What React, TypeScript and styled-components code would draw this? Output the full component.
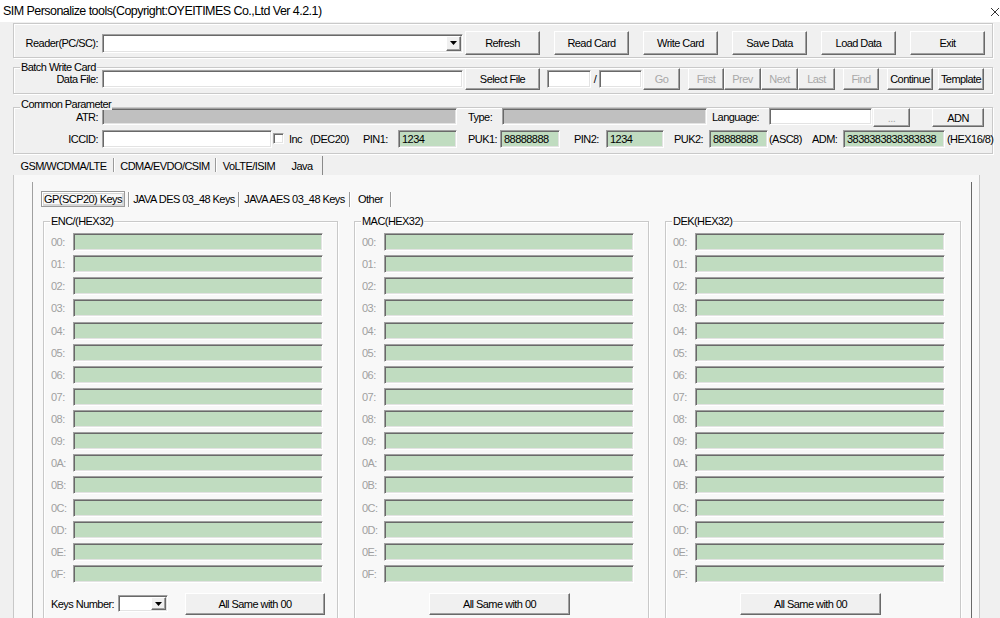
import React from 'react';
import styled, { createGlobalStyle, css } from 'styled-components';

const GlobalStyle = createGlobalStyle`
  html, body {
    margin: 0;
    padding: 0;
  }
  body {
    background: #f0f0f0;
    font-family: 'Liberation Sans', Arial, sans-serif;
    font-size: 11px;
    letter-spacing: -0.55px;
    color: #000;
  }
  * {
    box-sizing: border-box;
  }
`;

const sunken = css`
  border-style: solid;
  border-width: 1px;
  border-color: #a0a0a0 #ffffff #ffffff #a0a0a0;
  box-shadow: inset 1px 1px 0 #696969, inset -1px -1px 0 #e3e3e3;
`;

const raised = css`
  border-style: solid;
  border-width: 1px;
  border-color: #ffffff #696969 #696969 #ffffff;
  box-shadow: inset -1px -1px 0 #a0a0a0;
`;

const tones = {
  white: '#ffffff',
  green: '#c0dcc0',
  gray: '#c0c0c0',
};

const Window = styled.div`
  width: 1000px;
  height: 618px;
  overflow: hidden;
  display: flex;
  flex-direction: column;
  background: #f0f0f0;
`;

const TitleBar = styled.div`
  flex: none;
  height: 22px;
  background: #ffffff;
  display: flex;
  align-items: center;
  justify-content: space-between;
  padding-left: 3px;
`;

const Title = styled.span`
  font-size: 12.5px;
  letter-spacing: -0.55px;
  white-space: nowrap;
`;

const CloseIcon = styled.svg`
  flex: none;
  margin-top: 1px;
`;

const Main = styled.div`
  flex: 1;
  min-height: 0;
  display: flex;
  flex-direction: column;
  padding: 1px 7px 0 13px;
`;

const Frame = styled.div`
  flex: none;
  border: 1px solid #c9c9c9;
  box-shadow: inset 1px 1px 0 #ffffff, 1px 1px 0 #ffffff;
  padding: 7px 0 2px 0;
`;

const GroupBox = styled.div<{ $mt: number; $pb: number }>`
  position: relative;
  flex: none;
  margin-top: ${(p) => p.$mt}px;
  padding-bottom: ${(p) => p.$pb}px;
  border: 1px solid #c9c9c9;
  box-shadow: inset 1px 1px 0 #ffffff, 1px 1px 0 #ffffff;
`;

const Legend = styled.span<{ $bg: string; $top?: number }>`
  position: absolute;
  top: ${(p) => p.$top ?? -7}px;
  left: 6px;
  line-height: 12px;
  padding: 0 1px;
  background: ${(p) => p.$bg};
  white-space: nowrap;
`;

const Row = styled.div<{ $h: number; $mt?: number; $align?: string }>`
  display: flex;
  align-items: ${(p) => p.$align || 'center'};
  height: ${(p) => p.$h}px;
  margin-top: ${(p) => p.$mt || 0}px;
`;

const Label = styled.span<{ $w?: number; $ml?: number; $right?: boolean; $muted?: boolean; $lh?: number }>`
  flex: none;
  width: ${(p) => (p.$w ? `${p.$w}px` : 'auto')};
  margin-left: ${(p) => p.$ml || 0}px;
  text-align: ${(p) => (p.$right ? 'right' : 'left')};
  white-space: nowrap;
  line-height: ${(p) => (p.$lh ? `${p.$lh}px` : 'normal')};
  color: ${(p) => (p.$muted ? '#a0a0a0' : '#000')};
`;

const Field = styled.div<{ $w: number; $h: number; $tone: keyof typeof tones; $ml?: number }>`
  ${sunken};
  flex: none;
  width: ${(p) => p.$w}px;
  height: ${(p) => p.$h}px;
  margin-left: ${(p) => p.$ml || 0}px;
  background: ${(p) => tones[p.$tone]};
  padding: 0 3px;
  line-height: ${(p) => p.$h - 2}px;
  white-space: nowrap;
  overflow: hidden;
`;

const Combo = styled.div<{ $w: number; $h: number; $ml?: number }>`
  ${sunken};
  flex: none;
  width: ${(p) => p.$w}px;
  height: ${(p) => p.$h}px;
  margin-left: ${(p) => p.$ml || 0}px;
  background: #ffffff;
  display: flex;
  justify-content: flex-end;
  padding: 1px;
`;

const DropBtn = styled.div`
  ${raised};
  width: 15px;
  background: #f0f0f0;
  display: flex;
  align-items: center;
  justify-content: center;
`;

const Button = styled.button<{ $w: number; $h: number; $ml?: number; $off?: boolean }>`
  ${raised};
  flex: none;
  width: ${(p) => p.$w}px;
  height: ${(p) => p.$h}px;
  margin: 0 0 0 ${(p) => p.$ml || 0}px;
  padding: 0;
  background: #f0f0f0;
  font: inherit;
  letter-spacing: inherit;
  color: ${(p) => (p.$off ? '#a8a8a8' : '#000')};
  white-space: nowrap;
  cursor: default;
`;

const Slash = styled.span`
  flex: none;
  width: 8px;
  text-align: center;
`;

const Check = styled.div<{ $ml: number }>`
  ${sunken};
  flex: none;
  width: 11px;
  height: 11px;
  margin-left: ${(p) => p.$ml}px;
  background: #ffffff;
`;

const TabStrip = styled.div`
  flex: none;
  display: flex;
  height: 19px;
  margin-top: 2px;
`;

const Tab = styled.div<{ $w: number; $sep?: boolean; $active?: boolean }>`
  position: relative;
  flex: none;
  width: ${(p) => p.$w}px;
  display: flex;
  align-items: center;
  justify-content: center;
  white-space: nowrap;
  border-right: ${(p) => (p.$active ? '1px solid #8a8a8a' : 'none')};
  ${(p) =>
    p.$sep &&
    css`
      &::after {
        content: '';
        position: absolute;
        right: 0;
        top: 2px;
        bottom: 3px;
        width: 1px;
        background: #9a9a9a;
        box-shadow: 1px 0 0 #ffffff;
      }
    `}
`;

const OuterPanel = styled.div`
  flex: 1;
  min-height: 0;
  display: flex;
  flex-direction: column;
  margin-right: 13px;
  padding: 7px 7px 0 18px;
  background: #f8f8f8;
  border-left: 1px solid #c8c8c8;
  border-right: 1px solid #c8c8c8;
`;

const InnerBox = styled.div`
  flex: 1;
  display: flex;
  flex-direction: column;
  padding-top: 8px;
  border-left: 1px solid #a0a0a0;
  border-right: 1px solid #696969;
`;

const InnerStrip = styled.div`
  flex: none;
  display: flex;
  height: 18px;
  padding-left: 7px;
`;

const InnerTab = styled.div<{ $w: number }>`
  position: relative;
  flex: none;
  width: ${(p) => p.$w}px;
  display: flex;
  align-items: center;
  justify-content: center;
  white-space: nowrap;
  &::after {
    content: '';
    position: absolute;
    right: 0;
    top: 2px;
    bottom: 1px;
    width: 1px;
    background: #9a9a9a;
    box-shadow: 1px 0 0 #ffffff;
  }
`;

const ActiveBox = styled.span`
  display: flex;
  align-items: center;
  justify-content: center;
  height: 16px;
  width: 84px;
  margin-right: 3px;
  border: 1px solid #9a9a9a;
  box-shadow: inset 1px 1px 0 #ffffff, inset 0 0 0 2px #d6d6d6;
`;

const KeyPanel = styled.div`
  flex: 1;
  display: grid;
  grid-template-columns: 295px 295px 296px;
  column-gap: 16px;
  padding: 0 11px 0 10px;
  align-items: start;
`;

const KeyGroup = styled(GroupBox)`
  display: flex;
  flex-direction: column;
  padding: 11px 0 20px 7px;
`;

const KeyRows = styled.div`
  display: flex;
  flex-direction: column;
  gap: 4.13px;
`;

const KeyRow = styled.div`
  display: flex;
  align-items: center;
  height: 18px;
`;

const BottomRow = styled.div`
  display: flex;
  align-items: center;
  height: 22px;
  margin-top: 10px;
`;

const Arrow = () => (
  <svg width="7" height="4" viewBox="0 0 7 4">
    <path d="M0 0H7L3.5 4Z" fill="#000" />
  </svg>
);

const readerButtons = ['Refresh', 'Read Card', 'Write Card', 'Save Data', 'Load Data', 'Exit'];

const keyIds = ['00', '01', '02', '03', '04', '05', '06', '07', '08', '09', '0A', '0B', '0C', '0D', '0E', '0F'];

const outerTabs = [
  { label: 'GSM/WCDMA/LTE', w: 101, sep: true },
  { label: 'CDMA/EVDO/CSIM', w: 102, sep: true },
  { label: 'VoLTE/ISIM', w: 66, sep: false },
  { label: 'Java', w: 41, active: true },
];

const innerTabs = [
  { label: 'JAVA DES 03_48 Keys', w: 110 },
  { label: 'JAVA AES 03_48 Keys', w: 111 },
  { label: 'Other', w: 41 },
];

const keyGroups = ['ENC/(HEX32)', 'MAC(HEX32)', 'DEK(HEX32)'];

const App = () => {
  return (
    <>
      <GlobalStyle />
      <Window>
        <TitleBar>
          <Title>SIM Personalize tools(Copyright:OYEITIMES Co.,Ltd Ver 4.2.1)</Title>
          <CloseIcon width="10" height="10" viewBox="0 0 10 10">
            <path d="M1 1L9 9M9 1L1 9" stroke="#333" strokeWidth="1" fill="none" />
          </CloseIcon>
        </TitleBar>

        <Main>
          <Frame>
            <Row $h={24}>
              <Label $w={84} $right>
                Reader(PC/SC):
              </Label>
              <Combo $w={361} $h={19} $ml={4}>
                <DropBtn>
                  <Arrow />
                </DropBtn>
              </Combo>
              {readerButtons.map((b, i) => (
                <Button key={b} $w={75} $h={24} $ml={i === 0 ? 2 : 14}>
                  {b}
                </Button>
              ))}
            </Row>
          </Frame>

          <GroupBox $mt={9} $pb={3}>
            <Legend $bg="#f0f0f0" $top={-7}>
              Batch Write Card
            </Legend>
            <Row $h={22}>
              <Label $w={84} $right>
                Data File:
              </Label>
              <Field $w={361} $h={18} $tone="white" $ml={4} />
              <Button $w={75} $h={22} $ml={2}>
                Select File
              </Button>
              <Field $w={44} $h={18} $tone="white" $ml={7} />
              <Slash>/</Slash>
              <Field $w={43} $h={18} $tone="white" />
              <Button $w={37} $h={22} $ml={1} $off>
                Go
              </Button>
              <Button $w={36} $h={22} $ml={8} $off>
                First
              </Button>
              <Button $w={37} $h={22} $off>
                Prev
              </Button>
              <Button $w={37} $h={22} $off>
                Next
              </Button>
              <Button $w={37} $h={22} $off>
                Last
              </Button>
              <Button $w={36} $h={22} $ml={8} $off>
                Find
              </Button>
              <Button $w={46} $h={22} $ml={8}>
                Continue
              </Button>
              <Button $w={46} $h={22} $ml={5}>
                Template
              </Button>
            </Row>
          </GroupBox>

          <GroupBox $mt={13} $pb={5}>
            <Legend $bg="#f0f0f0" $top={-10}>
              Common Parameter
            </Legend>
            <Row $h={19} $align="flex-start">
              <Label $w={84} $right $lh={18}>
                ATR:
              </Label>
              <Field $w={355} $h={17} $tone="gray" $ml={4} />
              <Label $w={34} $ml={11} $lh={18}>
                Type:
              </Label>
              <Field $w={205} $h={17} $tone="gray" />
              <Label $w={57} $ml={5} $lh={18}>
                Language:
              </Label>
              <Field $w={103} $h={17} $tone="white" />
              <Button $w={37} $h={19} $ml={1} $off>
                ...
              </Button>
              <Button $w={52} $h={19} $ml={22}>
                ADN
              </Button>
            </Row>
            <Row $h={19} $mt={2}>
              <Label $w={84} $right>
                ICCID:
              </Label>
              <Field $w={170} $h={18} $tone="white" $ml={4} />
              <Check $ml={1} />
              <Label $w={21} $ml={5}>
                Inc
              </Label>
              <Label $w={40}>(DEC20)</Label>
              <Label $w={35} $ml={13}>
                PIN1:
              </Label>
              <Field $w={59} $h={18} $tone="green">
                1234
              </Field>
              <Label $w={32} $ml={11}>
                PUK1:
              </Label>
              <Field $w={60} $h={18} $tone="green">
                88888888
              </Field>
              <Label $w={32} $ml={14}>
                PIN2:
              </Label>
              <Field $w={58} $h={18} $tone="green">
                1234
              </Field>
              <Label $w={35} $ml={10}>
                PUK2:
              </Label>
              <Field $w={59} $h={18} $tone="green">
                88888888
              </Field>
              <Label $w={43} $ml={1}>
                (ASC8)
              </Label>
              <Label $w={31}>ADM:</Label>
              <Field $w={102} $h={18} $tone="green">
                3838383838383838
              </Field>
              <Label $ml={2}>(HEX16/8)</Label>
            </Row>
          </GroupBox>

          <TabStrip>
            {outerTabs.map((t) => (
              <Tab key={t.label} $w={t.w} $sep={t.sep} $active={t.active}>
                {t.label}
              </Tab>
            ))}
          </TabStrip>

          <OuterPanel>
            <InnerBox>
              <InnerStrip>
                <InnerTab $w={89}>
                  <ActiveBox>GP(SCP20) Keys</ActiveBox>
                </InnerTab>
                {innerTabs.map((t) => (
                  <InnerTab key={t.label} $w={t.w}>
                    {t.label}
                  </InnerTab>
                ))}
              </InnerStrip>

              <KeyPanel>
                {keyGroups.map((g, gi) => (
                  <KeyGroup key={g} $mt={13} $pb={20}>
                    <Legend $bg="#f8f8f8">{g}</Legend>
                    <KeyRows>
                      {keyIds.map((k) => (
                        <KeyRow key={k}>
                          <Label $w={22} $muted>
                            {k}:
                          </Label>
                          <Field $w={250} $h={18} $tone="green" />
                        </KeyRow>
                      ))}
                    </KeyRows>
                    <BottomRow>
                      {gi === 0 ? (
                        <>
                          <Label $w={67}>Keys Number:</Label>
                          <Combo $w={50} $h={17}>
                            <DropBtn>
                              <Arrow />
                            </DropBtn>
                          </Combo>
                          <Button $w={140} $h={22} $ml={17}>
                            All Same with 00
                          </Button>
                        </>
                      ) : (
                        <Button $w={141} $h={22} $ml={67}>
                          All Same with 00
                        </Button>
                      )}
                    </BottomRow>
                  </KeyGroup>
                ))}
              </KeyPanel>
            </InnerBox>
          </OuterPanel>
        </Main>
      </Window>
    </>
  );
};

export default App;
